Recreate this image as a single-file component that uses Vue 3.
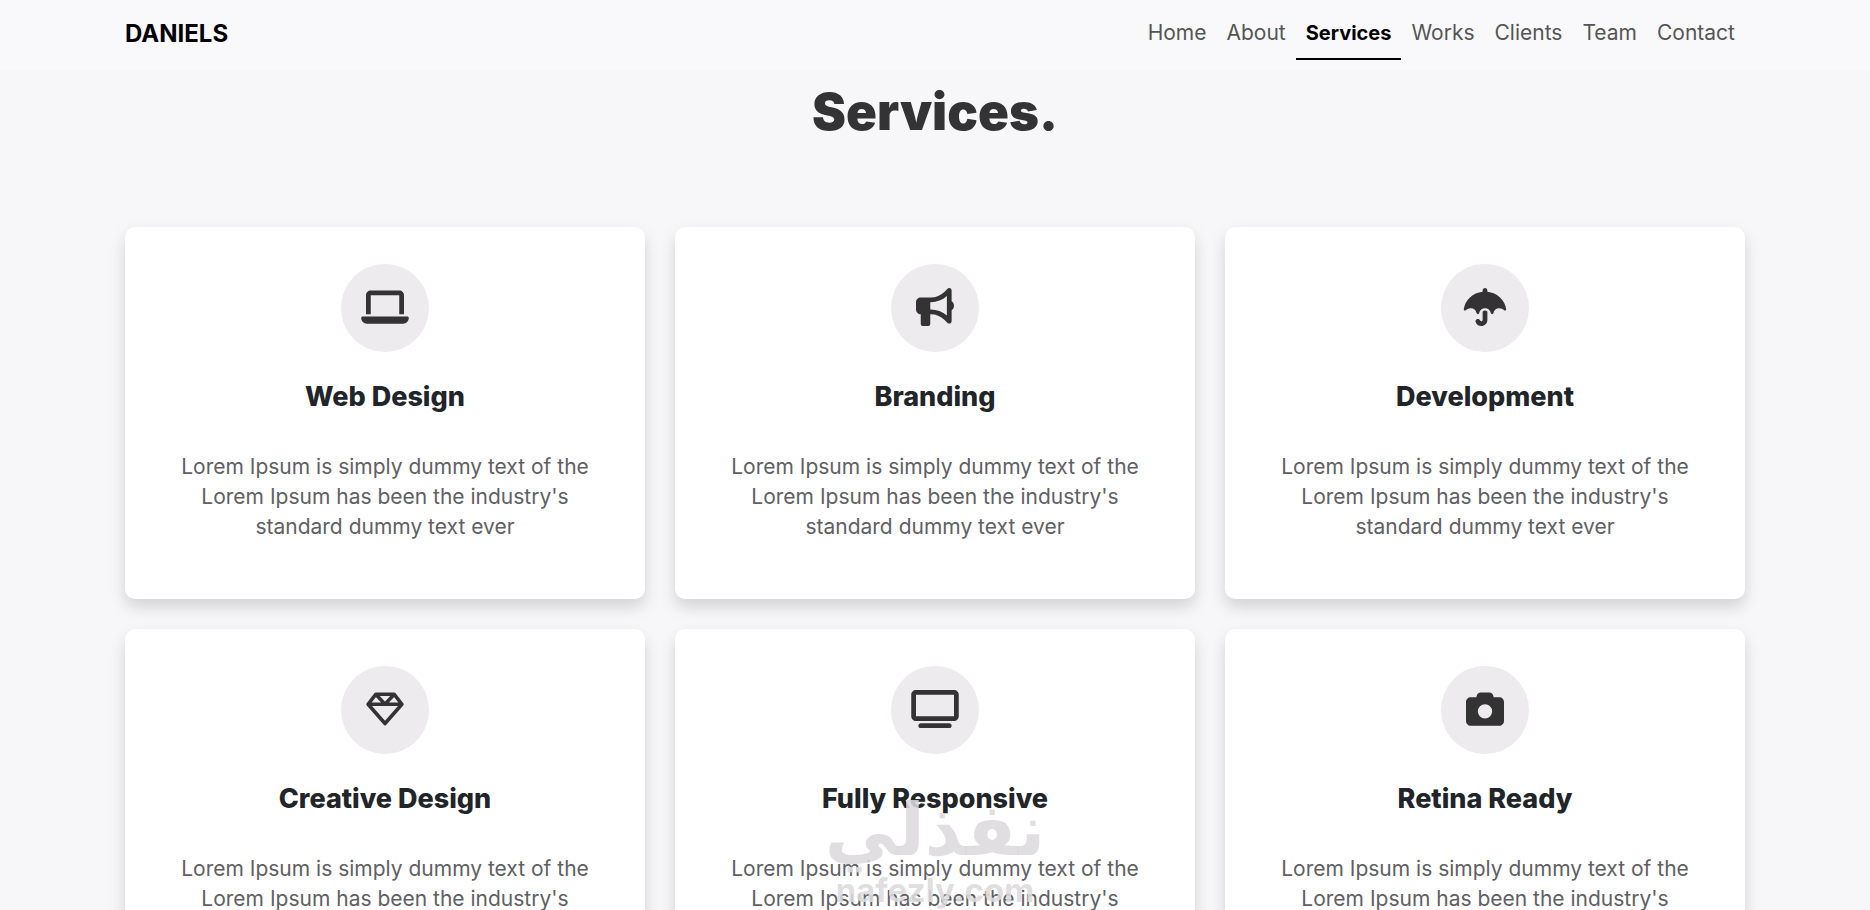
<script setup>
import { ref } from 'vue'

const active = ref('Services')
const links = ['Home', 'About', 'Services', 'Works', 'Clients', 'Team', 'Contact']

const blurb =
  "Lorem Ipsum is simply dummy text of the Lorem Ipsum has been the industry's standard dummy text ever"

const services = [
  {
    title: 'Web Design',
    box: '0 0 640 512',
    wide: true,
    path: 'M128 32C92.7 32 64 60.7 64 96V352h64V96H512V352h64V96c0-35.3-28.7-64-64-64H128zM19.2 384C8.6 384 0 392.6 0 403.2C0 445.6 34.4 480 76.8 480H563.2c42.4 0 76.8-34.4 76.8-76.8c0-10.6-8.6-19.2-19.2-19.2H19.2z'
  },
  {
    title: 'Branding',
    box: '0 0 512 512',
    path: 'M480 32c0-12.9-7.8-24.6-19.8-29.6s-25.7-2.2-34.9 6.9L381.7 53c-48 48-113.1 75-181 75H192 160 64c-35.3 0-64 28.7-64 64v96c0 35.3 28.7 64 64 64l0 128c0 17.7 14.3 32 32 32h64c17.7 0 32-14.3 32-32V352l8.7 0c67.9 0 133 27 181 75l43.6 43.6c9.2 9.2 22.9 11.9 34.9 6.9s19.8-16.6 19.8-29.6V300.4c18.6-8.8 32-32.5 32-60.4s-13.4-51.6-32-60.4V32zm-64 76.7V240 371.3C357.2 317.8 280.5 288 200.7 288H192V192h8.7c79.8 0 156.5-29.8 215.3-83.3z'
  },
  {
    title: 'Development',
    box: '-32 0 640 512',
    wide: true,
    path: 'M288 0c17.7 0 32 14.3 32 32V49.7C451.8 63.4 557.7 161 573.9 285.9c2 15.6-17.3 24.4-27.8 12.7C532.1 283 504.8 272 480 272c-38.7 0-71 27.5-78.4 64.1c-1.7 8.7-8.7 15.9-17.6 15.9s-15.8-7.2-17.6-15.9C359 299.5 326.7 272 288 272s-71 27.5-78.4 64.1c-1.7 8.7-8.7 15.9-17.6 15.9s-15.8-7.2-17.6-15.9C167 299.5 134.7 272 96 272c-24.8 0-52.1 11-66.1 26.7C19.3 310.5 0 301.7 2 286.1C18.2 161 124.2 63.4 256 49.7V32c0-17.7 14.3-32 32-32zm0 304c12.3 0 23.5 4.6 32 12.2V430.6c0 45-36.5 81.4-81.4 81.4c-30.8 0-59-17.4-72.8-45l-2.3-4.7c-7.9-15.8-1.5-35 14.3-42.9s35-1.5 42.9 14.3l2.3 4.7c3 5.9 9 9.6 15.6 9.6c9.6 0 17.4-7.8 17.4-17.4V316.2c8.5-7.6 19.7-12.2 32-12.2z'
  },
  {
    title: 'Creative Design',
    box: '0 0 512 512',
    outline: true,
    path: 'M134 56H378L484 192L256 452L28 192ZM28 192H484M134 60L256 190L378 60'
  },
  {
    title: 'Fully Responsive',
    box: '0 0 640 512',
    wide: true,
    path: 'M64 64V352H576V64H64zM0 64C0 28.7 28.7 0 64 0H576c35.3 0 64 28.7 64 64V352c0 35.3-28.7 64-64 64H64c-35.3 0-64-28.7-64-64V64zM128 448H512c17.7 0 32 14.3 32 32s-14.3 32-32 32H128c-17.7 0-32-14.3-32-32s14.3-32 32-32z'
  },
  {
    title: 'Retina Ready',
    box: '0 0 512 512',
    path: 'M149.1 64.8L138.7 96H64C28.7 96 0 124.7 0 160V416c0 35.3 28.7 64 64 64H448c35.3 0 64-28.7 64-64V160c0-35.3-28.7-64-64-64H373.3L362.9 64.8C356.4 45.2 338.1 32 317.4 32H194.6c-20.7 0-39 13.2-45.5 32.8zM256 192a96 96 0 1 1 0 192 96 96 0 1 1 0-192z'
  }
]
</script>

<template>
  <div class="page">
    <header class="topbar">
      <div class="container bar">
        <a class="brand" href="#home">DANIELS</a>
        <nav>
          <ul class="links">
            <li v-for="name in links" :key="name">
              <a
                :href="'#' + name.toLowerCase()"
                :class="{ active: active === name }"
                @click.prevent="active = name"
              >{{ name }}</a>
            </li>
          </ul>
        </nav>
      </div>
    </header>

    <main class="container">
      <h1>Services.</h1>
      <div class="grid">
        <article v-for="s in services" :key="s.title" class="card">
          <span class="disc">
            <svg :class="['icon', { wide: s.wide, outline: s.outline }]" :viewBox="s.box" aria-hidden="true">
              <path :d="s.path" fill-rule="evenodd" />
            </svg>
          </span>
          <h2>{{ s.title }}</h2>
          <p>{{ blurb }}</p>
        </article>
      </div>
    </main>

    <div class="watermark">
      <span class="mark-ar" lang="ar" dir="rtl">نفذلي</span>
      <span class="mark-en">nafezly.com</span>
    </div>
  </div>
</template>

<style>
html {
  scrollbar-width: none;
}
body {
  background: #f7f7f9;
}
</style>

<style scoped>
.page {
  font-family: Inter, "Noto Sans", sans-serif;
  color: #212529;
}
.container {
  box-sizing: border-box;
  max-width: 1650px;
  margin: 0 auto;
  padding: 0 15px;
}
.topbar {
  position: sticky;
  top: 0;
  z-index: 2;
  background: #f9f9fb;
}
.bar {
  display: flex;
  align-items: center;
  justify-content: space-between;
  height: 70px;
}
.brand {
  color: #000;
  font-size: 24px;
  font-weight: 700;
  line-height: 36px;
  text-decoration: none;
  padding-bottom: 2px;
}
.links {
  display: flex;
  list-style: none;
  margin: 0;
  padding: 0;
}
.links a {
  display: block;
  padding: 8px 10px 10px;
  border-bottom: 2px solid transparent;
  color: #555;
  font-size: 21px;
  line-height: 30px;
  text-decoration: none;
}
.links a.active {
  border-color: #000;
  color: #000;
  font-size: 20px;
  font-weight: 700;
}
h1 {
  margin: 0 0 82px;
  padding-top: 9px;
  text-align: center;
  color: #333335;
  font-size: 51px;
  font-weight: 900;
  line-height: 66px;
}
.grid {
  display: grid;
  grid-template-columns: repeat(3, 1fr);
  gap: 30px;
}
.card {
  display: flex;
  flex-direction: column;
  align-items: center;
  padding: 37px 40px 57px;
  border-radius: 10px;
  background: #fff;
  box-shadow: 0 8px 16px rgba(0, 0, 0, 0.15);
  text-align: center;
}
.disc {
  box-sizing: border-box;
  display: flex;
  align-items: center;
  justify-content: center;
  width: 88px;
  height: 88px;
  padding-bottom: 2px;
  border-radius: 50%;
  background: #edebed;
}
.icon {
  width: 38px;
  height: 38px;
  fill: #333;
}
.icon.wide {
  width: 48px;
}
.icon.outline {
  fill: none;
  stroke: #333;
  stroke-width: 48;
  stroke-linejoin: round;
}
h2 {
  margin: 30px 0 40px;
  font-size: 27px;
  font-weight: 800;
  line-height: 30px;
}
p {
  max-width: 430px;
  margin: 0;
  color: #606064;
  font-size: 21px;
  font-weight: 400;
  line-height: 30px;
}
.watermark {
  position: fixed;
  bottom: 0;
  left: 50%;
  z-index: 3;
  display: flex;
  flex-direction: column;
  align-items: center;
  transform: translateX(-50%);
  color: rgba(220, 218, 221, 0.88);
  font-weight: 700;
  pointer-events: none;
}
.mark-ar {
  font-family: "DejaVu Sans", sans-serif;
  font-size: 72px;
  line-height: 80px;
}
.mark-en {
  font-size: 33px;
  line-height: 40px;
}
</style>
